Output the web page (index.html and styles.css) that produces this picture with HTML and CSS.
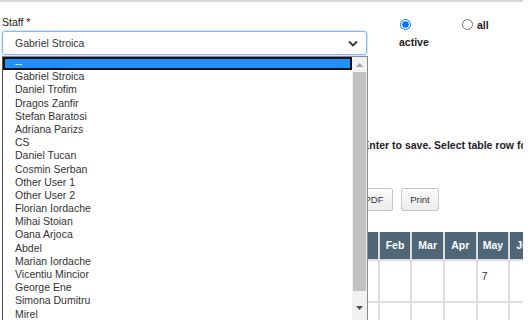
FILE: index.html
```html
<!DOCTYPE html>
<html lang="en">
<head>
    <meta charset="UTF-8">
    <meta name="viewport" content="width=device-width, initial-scale=1.0">
    <title>Staff Hours</title>
    <link rel="stylesheet" href="styles.css">
</head>
<body>
    <div class="page">
        <div class="filters">
            <div class="field">
                <label class="field-label">Staff *</label>
                <div class="select">
                    <span>Gabriel Stroica</span>
                    <svg class="chevron" width="10" height="7" viewBox="0 0 10 7"><path d="M1 1.5 L5 5.5 L9 1.5" fill="none" stroke="#333" stroke-width="1.8"/></svg>
                </div>
                <div class="select-list">
                    <div class="options">
                        <div class="option selected">--</div>
                        <div class="option">Gabriel Stroica</div>
                        <div class="option">Daniel Trofim</div>
                        <div class="option">Dragos Zanfir</div>
                        <div class="option">Stefan Baratosi</div>
                        <div class="option">Adriana Parizs</div>
                        <div class="option">CS</div>
                        <div class="option">Daniel Tucan</div>
                        <div class="option">Cosmin Serban</div>
                        <div class="option">Other User 1</div>
                        <div class="option">Other User 2</div>
                        <div class="option">Florian Iordache</div>
                        <div class="option">Mihai Stoian</div>
                        <div class="option">Oana Arjoca</div>
                        <div class="option">Abdel</div>
                        <div class="option">Marian Iordache</div>
                        <div class="option">Vicentiu Mincior</div>
                        <div class="option">George Ene</div>
                        <div class="option">Simona Dumitru</div>
                        <div class="option">Mirel</div>
                    </div>
                    <div class="scrollbar">
                        <div class="sb-arrow"><svg width="7" height="4" viewBox="0 0 7 4"><path d="M0 4 L3.5 0 L7 4 Z" fill="#a3a3a3"/></svg></div>
                        <div class="sb-thumb"></div>
                        <div class="sb-arrow sb-down"><svg width="7" height="4" viewBox="0 0 7 4"><path d="M0 0 L3.5 4 L7 0 Z" fill="#505050"/></svg></div>
                    </div>
                </div>
            </div>
            <div class="radios">
                <label class="radio"><input type="radio" name="status" checked> active</label>
                <label class="radio"><input type="radio" name="status"> all</label>
            </div>
        </div>

        <p class="hint">Click a cell to edit the hours, then press Enter to save. Select table row for details.</p>

        <div class="actions">
            <button>Excel</button>
            <button>CSV</button>
            <button>PDF</button>
            <button>Print</button>
        </div>

        <div class="grid">
            <div class="head">Project</div>
            <div class="head">Jan</div>
            <div class="head">Feb</div>
            <div class="head">Mar</div>
            <div class="head">Apr</div>
            <div class="head">May</div>
            <div class="head">Jun</div>
            <div class="head">Jul</div>
            <div class="head">Aug</div>
            <div class="head">Sep</div>
            <div class="head">Oct</div>
            <div class="head">Nov</div>
            <div class="head">Dec</div>

            <div class="cell">Internal</div>
            <div class="cell"></div>
            <div class="cell"></div>
            <div class="cell"></div>
            <div class="cell"></div>
            <div class="cell">7</div>
            <div class="cell"></div>
            <div class="cell"></div>
            <div class="cell"></div>
            <div class="cell"></div>
            <div class="cell"></div>
            <div class="cell"></div>
            <div class="cell"></div>

            <div class="cell">Support</div>
            <div class="cell"></div>
            <div class="cell"></div>
            <div class="cell"></div>
            <div class="cell"></div>
            <div class="cell"></div>
            <div class="cell"></div>
            <div class="cell"></div>
            <div class="cell"></div>
            <div class="cell"></div>
            <div class="cell"></div>
            <div class="cell"></div>
            <div class="cell"></div>
        </div>
    </div>
</body>
</html>
```

FILE: styles.css
```css
body {
    margin: 0;
    font-family: "Liberation Sans", Arial, sans-serif;
    font-size: 10.5px;
    color: #333;
    background: #fff;
}
.page {
    width: 521px;
    height: 320px;
    padding-left: 2px;
    overflow: hidden;
    border-top: 2px solid #d8d8d8;
}
.filters {
    display: flex;
    padding-top: 14px;
}
.field {
    position: relative;
    width: 365px;
}
.field-label {
    display: block;
    height: 15px;
    color: #222;
}
.select {
    display: flex;
    align-items: center;
    justify-content: space-between;
    height: 22px;
    padding: 0 8px 0 12px;
    border: 1px solid #86b7fe;
    border-radius: 3px;
    box-shadow: 0 0 0 1px #d6e7ff;
}
.select-list {
    position: absolute;
    top: 40px;
    left: 0;
    right: -1px;
    height: 264px;
    display: flex;
    background: #fff;
    border: 1px solid #8a8a8a;
    border-left-color: #555;
    z-index: 2;
}
.options {
    flex: 1;
    overflow: hidden;
}
.option {
    height: 13.2px;
    line-height: 13.2px;
    padding-left: 12px;
    white-space: nowrap;
}
.option.selected {
    background: #1e90ff;
    color: #fff;
    outline: 2px solid #111;
    outline-offset: -2px;
}
.scrollbar {
    width: 15px;
    display: flex;
    flex-direction: column;
    background: #f1f1f1;
}
.sb-arrow {
    height: 15px;
    display: flex;
    align-items: center;
    justify-content: center;
}
.sb-thumb {
    height: 219px;
    margin: 0 1px;
    background: #c1c1c1;
}
.sb-down {
    margin-top: auto;
    padding-bottom: 6px;
}
.radios {
    display: flex;
    padding-left: 32px;
    padding-top: 1px;
}
.radio {
    width: 40px;
    margin-right: 22px;
    font-weight: bold;
    line-height: 17px;
    color: #222;
}
.radio input {
    width: 11px;
    height: 11px;
    margin: 0 1px 0 1px;
    vertical-align: -1px;
}
.hint {
    margin: 84px 0 0 159px;
    font-weight: bold;
    white-space: nowrap;
    color: #222;
}
.actions {
    display: flex;
    gap: 8px;
    margin-top: 37px;
    padding-left: 261px;
}
button {
    width: 38px;
    height: 23px;
    padding: 0;
    font-family: "Liberation Sans", Arial, sans-serif;
    font-size: 9.5px;
    color: #333;
    background: linear-gradient(#fbfbfb, #ececec);
    border: 1px solid #c6c6c6;
    border-radius: 2px;
}
.grid {
    display: grid;
    grid-template-columns: 284px 89.67px repeat(11, 30.67px);
    grid-auto-rows: 40px;
    grid-template-rows: 27px;
    gap: 2px;
    margin-top: 21px;
    background: #dedede;
    width: max-content;
}
.head {
    background: #4e6676;
    color: #fff;
    font-weight: bold;
    text-align: center;
    line-height: 27px;
}
.cell {
    background: #fff;
    padding: 9px 4px 0;
}
```
